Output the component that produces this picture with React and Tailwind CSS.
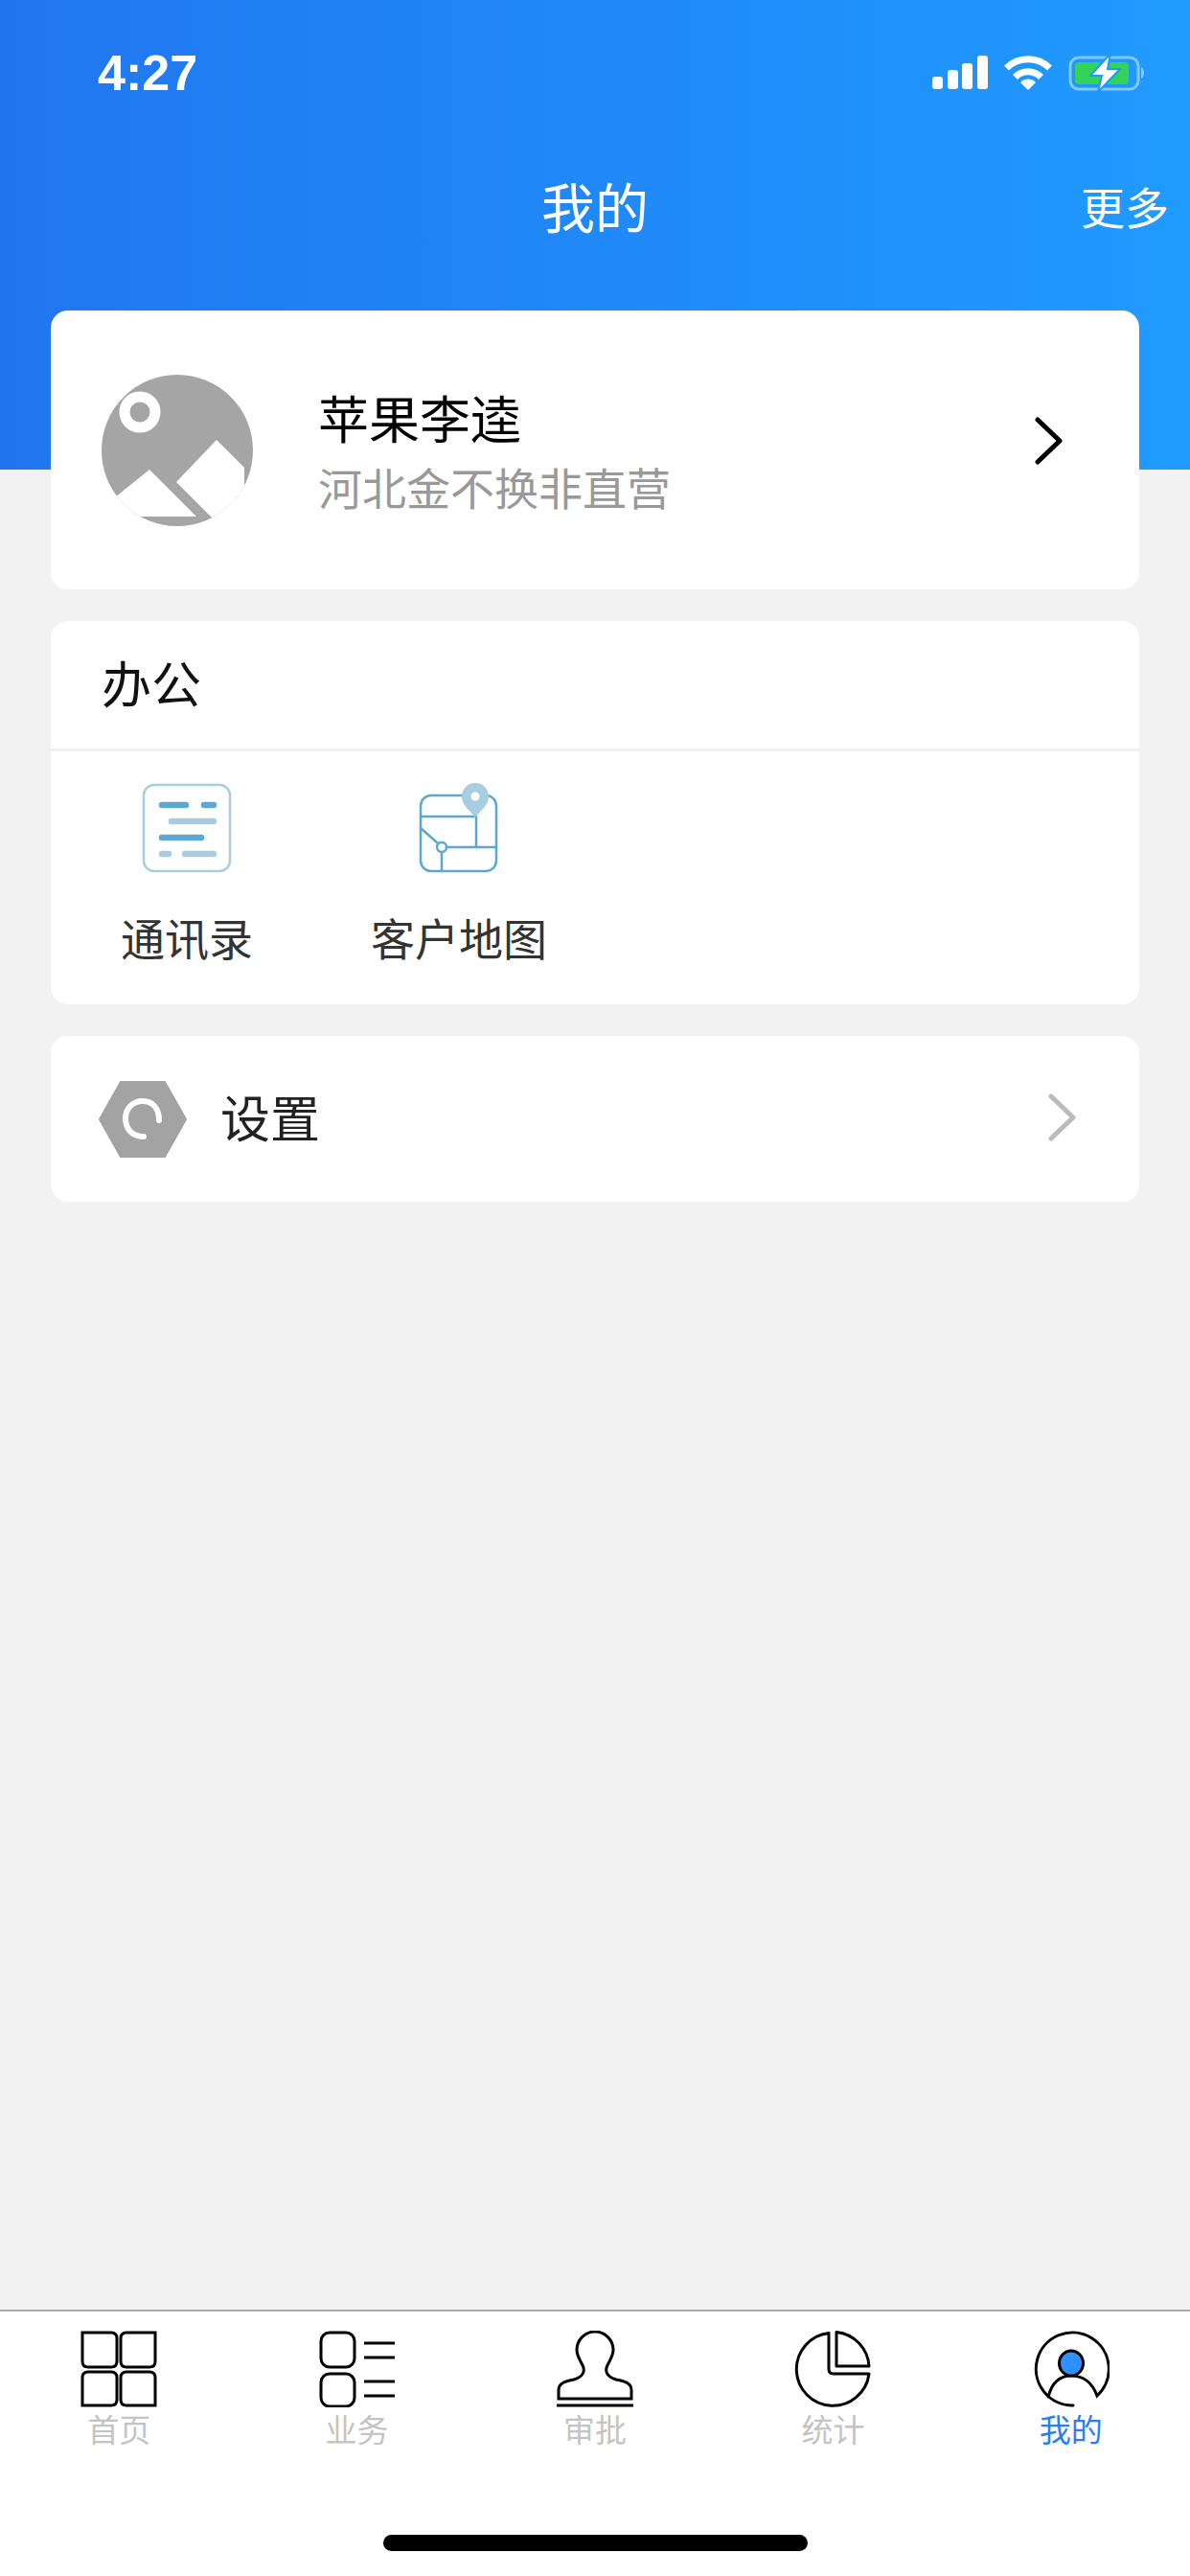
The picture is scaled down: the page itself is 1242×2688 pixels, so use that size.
import React from 'react';

const FONT = "font-['Noto_Sans_CJK_SC','Noto_Sans',sans-serif]";

function SignalIcon() {
  return (
    <svg width="58" height="36" viewBox="0 0 58 36" fill="#fff">
      <rect x="0" y="22" width="11" height="13" rx="3" />
      <rect x="16" y="15" width="11" height="20" rx="3" />
      <rect x="31" y="8" width="11" height="27" rx="3" />
      <rect x="47" y="0" width="11" height="35" rx="3" />
    </svg>
  );
}

function WifiIcon() {
  return (
    <svg width="52" height="36" viewBox="0 0 52 36" fill="none" stroke="#fff" strokeWidth="7">
      <path d="M3.5 13 A32 32 0 0 1 48.5 13" />
      <path d="M12.5 22.5 A19 19 0 0 1 39.5 22.5" />
      <path d="M26 36 L18 28 A11 11 0 0 1 34 28 Z" fill="#fff" stroke="none" />
    </svg>
  );
}

function BatteryIcon() {
  return (
    <svg width="80" height="40" viewBox="0 0 80 40" fill="none">
      <rect x="2" y="4" width="71" height="33" rx="9" stroke="#fff" strokeOpacity="0.45" strokeWidth="3" />
      <path d="M76 14 C80 16 80 24 76 26 Z" fill="#fff" fillOpacity="0.5" />
      <rect x="7" y="9" width="56" height="23" rx="4" fill="#34d15b" />
      <path d="M44 0 L23 23 H35 L31 40 L54 16 H41 Z" fill="#fff" stroke="#1f97fd" strokeWidth="2" />
    </svg>
  );
}

function Avatar() {
  return (
    <svg width="158" height="158" viewBox="0 0 158 158" className="shrink-0">
      <defs>
        <clipPath id="avatar-clip">
          <circle cx="79" cy="79" r="79" />
        </clipPath>
      </defs>
      <circle cx="79" cy="79" r="79" fill="#a5a5a5" />
      <circle cx="40" cy="39" r="16" fill="#a5a5a5" stroke="#fff" strokeWidth="11" />
      <g clipPath="url(#avatar-clip)" fill="#fff">
        <polygon points="14,128 50,99 99,148 41,148 0,150" />
        <polygon points="120,68 149,97 149,116 140,150 115,149 78,112" />
      </g>
    </svg>
  );
}

function Chevron({ color, width }) {
  return (
    <svg width="30" height="50" viewBox="0 0 30 50" fill="none" stroke={color} strokeWidth={width} strokeLinecap="round" strokeLinejoin="round">
      <path d="M3 3 L26 25 L3 47" />
    </svg>
  );
}

function ContactsIcon() {
  return (
    <svg width="94" height="94" viewBox="0 0 94 94" fill="none" strokeLinecap="round" strokeWidth="6.5">
      <rect x="2" y="2" width="90" height="90" rx="11" stroke="#a8cde0" strokeWidth="2.5" />
      <path d="M21 23 H46 M65 23 H75 M21 57 H62" stroke="#5ba8d3" />
      <path d="M31 40 H75 M21 74 H28 M45 74 H75" stroke="#a8cde0" />
    </svg>
  );
}

function MapIcon() {
  return (
    <svg width="84" height="94" viewBox="0 0 84 94" fill="none" stroke="#5ba8d3" strokeWidth="2.5">
      <rect x="2" y="13" width="79" height="79" rx="11" />
      <path d="M2 35 H60 V67 M81 67 H24 M2 47 L20 63 M24 72 V92" />
      <circle cx="24" cy="67" r="5" fill="#fff" />
      <path d="M59 36 C54 29 45 24 45 14 A14 14 0 0 1 73 14 C73 24 64 29 59 36 Z" fill="#a8cde0" stroke="none" />
      <circle cx="59" cy="14" r="4.5" fill="#fff" stroke="none" />
    </svg>
  );
}

function SettingsIcon() {
  return (
    <svg width="92" height="80" viewBox="0 0 92 80" className="shrink-0">
      <path d="M23 1 H69 L91 40 L69 79 H23 L1 40 Z" fill="#a3a3a3" stroke="#a3a3a3" strokeWidth="2" strokeLinejoin="round" />
      <path d="M47 58 C34 58 28 49 28 39 C28 28 36 21 46 21 C56 21 63 28 63 41" fill="none" stroke="#fff" strokeWidth="6" strokeLinecap="round" />
    </svg>
  );
}

function HomeTabIcon() {
  return (
    <svg width="80" height="80" viewBox="0 0 80 80" fill="none" stroke="#000" strokeWidth="3">
      <path d="M2 2 H32 Q38 2 38 8 V32 Q38 38 32 38 H8 Q2 38 2 32 Z" />
      <path d="M78 2 V32 Q78 38 72 38 H48 Q42 38 42 32 V8 Q42 2 48 2 Z" />
      <path d="M2 78 V49 Q2 43 8 43 H32 Q38 43 38 49 V72 Q38 78 32 78 Z" />
      <path d="M78 78 H48 Q42 78 42 72 V49 Q42 43 48 43 H72 Q78 43 78 49 Z" />
    </svg>
  );
}

function BizTabIcon() {
  return (
    <svg width="80" height="80" viewBox="0 0 80 80" fill="none" stroke="#000" strokeWidth="3">
      <rect x="2" y="2" width="35" height="36" rx="9" />
      <rect x="2" y="45" width="35" height="34" rx="9" />
      <path d="M47 13 H79 M47 28 H79 M47 53 H79 M47 68 H79" />
    </svg>
  );
}

function StampTabIcon() {
  return (
    <svg width="80" height="80" viewBox="0 0 80 80" fill="none" stroke="#000" strokeWidth="3">
      <path d="M2 71 V62 C2 54 10 53 18 51 C28 48 30 42 27 36 C24 30 21 26 21 20 A19 19 0 0 1 59 20 C59 26 56 30 53 36 C50 42 52 48 62 51 C70 53 78 54 78 62 V71 Z" />
      <path d="M0 78 H80" />
    </svg>
  );
}

function PieTabIcon() {
  return (
    <svg width="80" height="80" viewBox="0 0 80 80" fill="none" stroke="#000" strokeWidth="3" strokeLinejoin="round">
      <path d="M36 2.5 V40 Q36 45 41 45 H78 A38 38 0 1 1 36 2.5 Z" />
      <path d="M44 1.5 V37 H78 A38 38 0 0 0 44 1.5 Z" />
    </svg>
  );
}

function MineTabIcon() {
  return (
    <svg width="80" height="80" viewBox="0 0 80 80" fill="none" stroke="#000" strokeWidth="3" strokeLinecap="round">
      <path d="M42 78 A38 38 0 1 1 67 68 C62 54 52 47 40 47 C29 47 20 54 16 69" />
      <ellipse cx="40" cy="34" rx="12.5" ry="13" fill="#2f90ff" />
    </svg>
  );
}

const tabs = [
  { label: '首页', Icon: HomeTabIcon },
  { label: '业务', Icon: BizTabIcon },
  { label: '审批', Icon: StampTabIcon },
  { label: '统计', Icon: PieTabIcon },
  { label: '我的', Icon: MineTabIcon, active: true },
];

export default function App() {
  return (
    <div className={`${FONT} flex h-[2688px] w-full flex-col bg-[#f2f2f2]`}>
      <header className="h-[490px] shrink-0 bg-gradient-to-r from-[#2176f0] to-[#1f9bff] text-white">
        <div className="box-content flex h-[42px] items-center justify-between pt-[55px] pl-[102px] pr-[47px]">
          <span className="font-['Liberation_Sans',sans-serif] text-[52px] leading-none font-bold">4:27</span>
          <div className="flex items-center gap-[16px]">
            <SignalIcon />
            <WifiIcon />
            <BatteryIcon />
          </div>
        </div>
        <div className="mt-[77px] grid grid-cols-[1fr_auto_1fr] items-center px-[22px]">
          <span />
          <h1 className="text-[56px] leading-[80px] font-normal">我的</h1>
          <span className="justify-self-end text-[46px] leading-[80px]">更多</span>
        </div>
      </header>

      <main className="-mt-[166px] flex flex-1 flex-col gap-[33px] px-[53px]">
        <section className="flex h-[291px] items-center justify-between rounded-[18px] bg-white pl-[53px] pr-[79px]">
          <div className="flex items-center gap-[68px]">
            <Avatar />
            <div className="mt-[2px]">
              <div className="text-[53px] leading-[72px] text-black">苹果李逵</div>
              <div className="text-[46px] leading-[72px] text-[#999]">河北金不换非直营</div>
            </div>
          </div>
          <div className="-mt-[20px]"><Chevron color="#000" width={5} /></div>
        </section>

        <section className="h-[400px] rounded-[18px] bg-white">
          <div className="flex h-[136px] items-center border-b-[3px] border-[#f0f0f0] pb-[6px] pl-[53px] text-[52px] text-[#111]">办公</div>
          <div className="grid grid-cols-4 pt-[33px]">
            <div className="flex flex-col items-center">
              <ContactsIcon />
              <span className="mt-[36px] text-[46px] leading-[60px] text-[#333]">通讯录</span>
            </div>
            <div className="flex flex-col items-center">
              <MapIcon />
              <span className="mt-[36px] text-[46px] leading-[60px] text-[#333]">客户地图</span>
            </div>
          </div>
        </section>

        <section className="flex h-[173px] items-center justify-between rounded-[18px] bg-white pl-[50px] pr-[65px]">
          <div className="flex items-center gap-[35px]">
            <SettingsIcon />
            <span className="-mt-[6px] text-[52px] text-[#222]">设置</span>
          </div>
          <div className="-mt-[4px]"><Chevron color="#bbb" width={5} /></div>
        </section>
      </main>

      <footer className="flex h-[278px] shrink-0 flex-col border-t-2 border-[#aaa] bg-white">
        <nav className="grid grid-cols-5 pt-[20px]">
          {tabs.map(({ label, Icon, active }) => (
            <div key={label} className="flex flex-col items-center">
              <Icon />
              <span className={`text-[33px] leading-[44px] ${active ? 'text-[#2b7cf6]' : 'text-[#c4c4c4]'}`}>{label}</span>
            </div>
          ))}
        </nav>
        <div className="mx-auto mt-[89px] h-[17px] w-[443px] rounded-full bg-black" />
      </footer>
    </div>
  );
}
